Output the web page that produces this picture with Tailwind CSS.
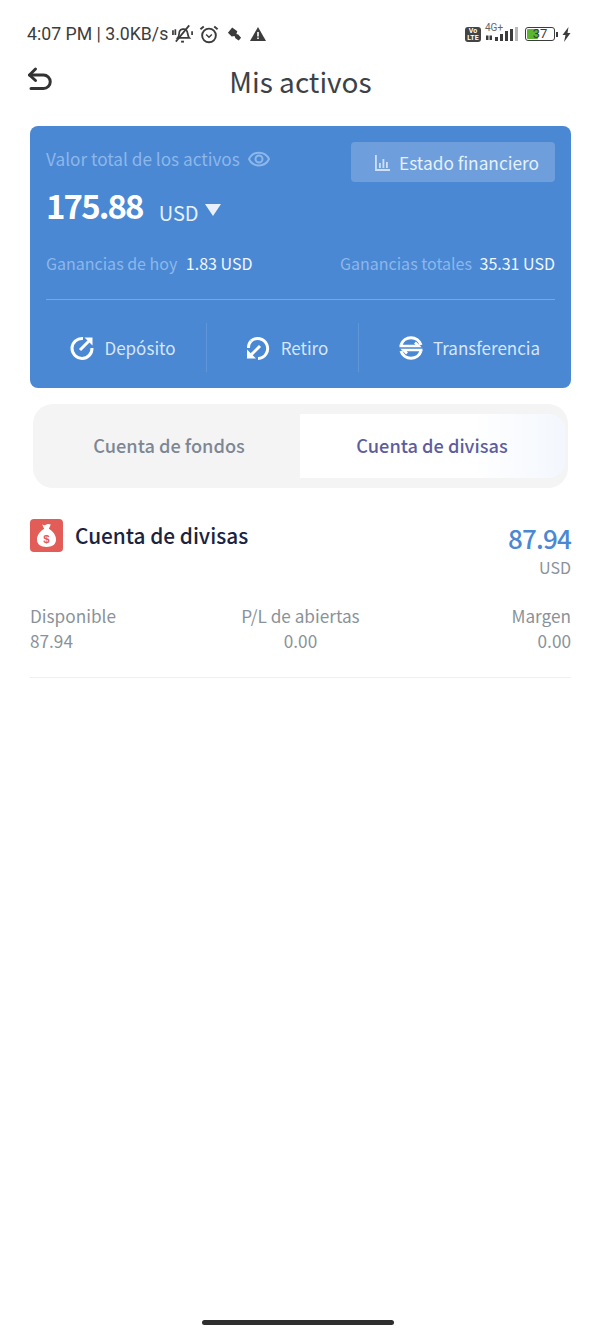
<!DOCTYPE html>
<html lang="es">

<head>
  <meta charset="UTF-8">
  <meta name="viewport" content="width=device-width, initial-scale=1.0">
  <title>Mis activos</title>
  <script src="https://cdn.jsdelivr.net/npm/@tailwindcss/browser@4"></script>
</head>

<body class="bg-white">
  <div class="w-[600px] h-[1333px] flex flex-col overflow-hidden font-['Noto_Sans_CJK_SC','Noto_Sans',sans-serif]">

    <!-- status bar -->
    <div class="h-[56px] pl-[27px] pr-[29px] pt-[22px] flex justify-between items-start text-[#3c3c3c]">
      <div class="flex items-center h-[24px] font-['Roboto',sans-serif] text-[17.7px] leading-[24px] whitespace-nowrap">
        <span>4:07 PM | 3.0KB/s</span>
        <svg class="ml-[4px]" width="22" height="22" viewBox="0 0 23 22" fill="none" stroke="#3c3c3c" stroke-width="1.800">
          <path d="M6 15c2-2 1-5 2-7 1-2 5-3 7-1 2 2 1 6 3 8z" />
          <path d="M4 19L18 2" />
          <path d="M1 7v5M3.500 6v6M21 8v4" />
          <path d="M9.500 19h3" stroke-width="2" />
        </svg>
        <svg class="ml-[5px]" width="20" height="21" viewBox="0 0 21 21" fill="none" stroke="#3c3c3c" stroke-width="2">
          <circle cx="10.500" cy="11.500" r="7.200" />
          <path d="M7.500 10.500l3 3 3-3" stroke-width="1.500" />
          <path d="M1.500 5l3.500-3M19.500 5L16 2" />
        </svg>
        <svg class="ml-[8px]" width="15" height="15" viewBox="0 0 16 16" fill="#3c3c3c">
          <path d="M1 6l4.500-5.500 5.500 4-1 3 2 .5 3 3.500-2.500 3-3.500-2.500-1-2.500-3 .5z" />
        </svg>
        <svg class="ml-[8px]" width="16" height="16" viewBox="0 0 16 16">
          <path d="M8 1L16 15H0z" fill="#3c3c3c" />
          <path d="M7.200 6h1.600v4.500H7.200zM7.200 11.500h1.600v1.500H7.200z" fill="#fff" />
        </svg>
      </div>
      <div class="flex items-center h-[24px]">
        <div class="w-[16px] h-[15px] rounded-[3px] bg-[#444] text-white text-[7px] leading-[7px] pt-px font-bold text-center font-['Roboto',sans-serif]">Vo<br>LTE</div>
        <div class="ml-[4px] w-[34px] h-[17px] relative">
          <span class="absolute left-0 -top-[4px] text-[10px] leading-[12px] text-[#666] font-['Roboto',sans-serif]">4G+</span>
          <svg class="absolute left-0 top-0" width="34" height="17" viewBox="0 0 34 17" fill="#3c3c3c">
            <path d="M1 9.500h2.500V14H1zM4.500 9.500H7V14H4.500z" />
            <rect x="10" y="11" width="3" height="4" />
            <rect x="15" y="8" width="3" height="7" />
            <rect x="20" y="5" width="3" height="10" />
            <rect x="25" y="3" width="3" height="12" />
            <rect x="30" y="1" width="3" height="14" fill="#b8b8b8" />
          </svg>
        </div>
        <div class="ml-[6px] w-[30px] h-[14px] rounded-[3px] border-[1.5px] border-[#3c3c3c] p-[1px] relative">
          <div class="h-full w-[11px] bg-[#5cb531] rounded-[1px]"></div>
          <span class="absolute inset-0 text-center text-[13px] leading-[11px] font-['Roboto',sans-serif]">37</span>
        </div>
        <div class="ml-[1px] w-[2px] h-[5px] bg-[#3c3c3c]"></div>
        <svg class="ml-[4px]" width="9" height="15" viewBox="0 0 9 15" fill="#3c3c3c">
          <path d="M6.500 0L.5 8h3L2 15l6.500-9h-3z" />
        </svg>
      </div>
    </div>

    <!-- title -->
    <div class="h-[54px] relative flex items-center justify-center text-[28px] leading-[50px] text-[#3c4248] pb-[4px]">
      <svg class="absolute left-[26px] top-[10px]" width="28" height="28" viewBox="0 0 28 28" fill="none" stroke="#333" stroke-width="3" stroke-linecap="round" stroke-linejoin="round">
        <path d="M9.500 3L3.500 9l6 5.500" />
        <path d="M3.500 9h14a6.500 6.500 0 0 1 0 13.500H5" />
      </svg>
      <span class="ml-[1px]">Mis activos</span>
    </div>

    <!-- balance card -->
    <div class="mt-[16px] ml-[30px] mr-[29px] h-[262px] rounded-[8px] bg-[#4a88d4] px-[16px] flex flex-col">
      <div class="flex justify-between items-start pt-[16px] h-[56px]">
        <div class="flex items-center h-[24px] mt-[5px] text-[17.2px] text-[#8db7ea]">
          <span>Valor total de los activos</span>
          <svg class="ml-[8px]" width="22" height="16" viewBox="0 0 22 16" fill="none" stroke="#8db7ea" stroke-width="2">
            <path d="M1 8c4-8.500 16-8.500 20 0-4 8.500-16 8.500-20 0z" />
            <circle cx="11" cy="8" r="3.500" />
          </svg>
        </div>
        <div class="w-[204px] h-[40px] pl-[7px] pt-px rounded-[4px] bg-white/20 flex items-center justify-center text-[17.3px] text-[#e6f0fb]">
          <svg class="mr-[9px]" width="16" height="16" viewBox="0 0 16 16" fill="#cfe0f6">
            <path d="M1 0h1.800v14H16v2H1z" />
            <path d="M5 8h1.800v5H5zM8.500 4h1.800v9H8.500zM12 7h1.800v6H12z" />
          </svg>
          <span>Estado financiero</span>
        </div>
      </div>
      <div class="flex items-end h-[50px] -mt-[2px] text-white">
        <span class="text-[33px] leading-[50px] font-bold tracking-[-1.900px]">175.88</span>
        <span class="ml-[16px] text-[20px] leading-[34px] text-[#e6f0fb]">USD</span>
        <svg class="ml-[6px] mb-[14px]" width="16" height="12" viewBox="0 0 16 12" fill="#e8f1fb">
          <path d="M0 0h16L8 12z" />
        </svg>
      </div>
      <div class="flex justify-between items-center mt-[21px] h-[24px] text-[16px]">
        <div>
          <span class="text-[#8db7ea]">Ganancias de hoy</span>
          <span class="ml-[5px] text-[#f0f6fd]">1.83 USD</span>
        </div>
        <div>
          <span class="text-[#8db7ea]">Ganancias totales</span>
          <span class="ml-[4px] text-[#f0f6fd]">35.31 USD</span>
        </div>
      </div>
      <div class="mt-[24px] h-px bg-[#77a6e0]"></div>
      <div class="flex items-center mt-[23px] h-[49px] -mx-[16px] text-[17px] text-[#d6e6f9]">
        <div class="w-[177px] pl-[9px] h-full flex items-center justify-center border-r border-[#5f96d9]">
          <svg class="mr-[9px]" width="26" height="26" viewBox="0 0 26 26" fill="none" stroke="#fff" stroke-width="3">
            <path d="M14 3.500A10 10 0 1 0 23 13" />
            <path d="M11 15L22 4" />
            <path d="M15.500 2.500h8v8z" fill="#fff" stroke="none" />
          </svg>
          <span>Depósito</span>
        </div>
        <div class="w-[152px] pl-[8px] h-full flex items-center justify-center border-r border-[#5f96d9]">
          <svg class="mr-[10px]" width="26" height="26" viewBox="0 0 26 26" fill="none" stroke="#fff" stroke-width="3">
            <path d="M6 6a10 10 0 1 1 7 17.500" />
            <path d="M3.500 13a10 10 0 0 1 2.500-7" />
            <path d="M15 11L5 21" />
            <path d="M2 14.500v9h9z" fill="#fff" stroke="none" />
          </svg>
          <span>Retiro</span>
        </div>
        <div class="flex-1 pl-[8px] h-full flex items-center justify-center">
          <svg class="mr-[9px]" width="26" height="26" viewBox="0 0 26 26" fill="none" stroke="#fff" stroke-width="3">
            <path d="M3 10A10.500 10.500 0 0 1 23 10" />
            <path d="M23 16A10.500 10.500 0 0 1 3 16" />
            <path d="M1.500 11h19l-3.500-3.500" stroke-width="2.600" />
            <path d="M24.500 15H5.500l3.500 3.500" stroke-width="2.600" />
          </svg>
          <span>Transferencia</span>
        </div>
      </div>
    </div>

    <!-- tabs -->
    <div class="mt-[16px] ml-[33px] mr-[32px] h-[84px] rounded-[20px] bg-[#f4f4f5] flex items-center text-[18.2px] font-medium">
      <div class="w-[267px] pl-[5px] text-center text-[#7d8793]">Cuenta de fondos</div>
      <div class="w-[265px] h-[64px] pr-px rounded-r-[16px] flex items-center justify-center text-[#5d5d9e] bg-gradient-to-r from-white from-65% to-[#f3f7fd]">Cuenta de divisas</div>
    </div>

    <!-- account -->
    <div class="mt-[30px] ml-[30px] mr-[29px] flex justify-between">
      <div class="flex items-center h-[34px]">
        <div class="w-[33px] h-[33px] rounded-[4px] bg-[#e25c58] flex items-center justify-center">
          <svg width="21" height="25" viewBox="0 0 22 26">
            <path d="M6.500 1.500c2 1 3 1 4.500 0s3-.5 4.500 0L13.500 6c4 2.500 7.500 6.500 7.500 11 0 6-4.500 8-10 8S1 23 1 17c0-4.500 3.500-8.500 7.500-11z" fill="#fff" />
            <text x="11" y="21" text-anchor="middle" font-size="12" font-weight="700" fill="#e25c58" font-family="Liberation Sans">$</text>
          </svg>
        </div>
        <span class="ml-[12px] mt-[2px] text-[20.8px] font-medium text-[#1a2340]">Cuenta de divisas</span>
      </div>
      <div class="text-right">
        <div class="text-[26px] leading-[38px] mt-px font-medium text-[#4a88d4] tracking-[-0.800px]">87.94</div>
        <div class="text-[16px] leading-[20px] text-[#8a9299]">USD</div>
      </div>
    </div>

    <div class="mt-[26px] ml-[30px] mr-[29px] grid grid-cols-3 text-[17.2px] leading-[25px] text-[#8a9299] pb-[24px] border-b border-[#eeeff1]">
      <div>
        <div>Disponible</div>
        <div>87.94</div>
      </div>
      <div class="text-center">
        <div>P/L de abiertas</div>
        <div>0.00</div>
      </div>
      <div class="text-right">
        <div>Margen</div>
        <div>0.00</div>
      </div>
    </div>

    <!-- home indicator -->
    <div class="mt-auto mb-[8px] ml-[202px] w-[192px] h-[5px] rounded-full bg-[#2e2e2e]"></div>
  </div>
</body>

</html>
